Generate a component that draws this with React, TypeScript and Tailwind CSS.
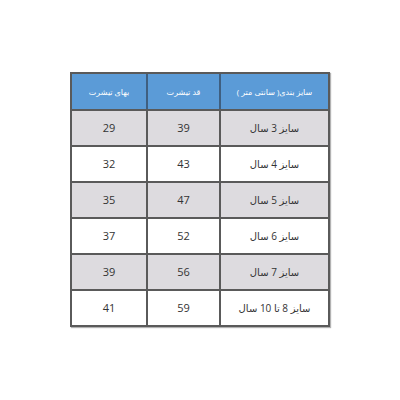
import React from "react";

const rows = [
    { size: "سایز 3 سال", height: "39", width: "29" },
    { size: "سایز 4 سال", height: "43", width: "32" },
    { size: "سایز 5 سال", height: "47", width: "35" },
    { size: "سایز 6 سال", height: "52", width: "37" },
    { size: "سایز 7 سال", height: "56", width: "39" },
    { size: "سایز 8 تا 10 سال", height: "59", width: "41" },
];

export default function App() {
    return (
        <div
            className="w-[400px] h-[400px] bg-white flex justify-center pt-[72px]"
            style={{ fontFamily: "'Open Sans', 'DejaVu Sans', sans-serif" }}
        >
            <div className="h-fit border-2 border-[#5a5a5a] shadow-[1px_1px_1px_rgba(0,0,0,0.3)]">
                <div className="grid grid-cols-[76px_73px_107px] h-[35px] bg-[#5b9bd7] text-white text-[8px]">
                    <div className="flex items-center justify-center border-r-2 border-[#3f5f80]" dir="rtl">بهای تیشرت</div>
                    <div className="flex items-center justify-center border-r-2 border-[#3f5f80]" dir="rtl">قد تیشرت</div>
                    <div className="flex items-center justify-center" dir="rtl">سایز بندی( سانتی متر )</div>
                </div>
                {rows.map((r, i) => (
                    <div
                        key={r.size}
                        className={`grid grid-cols-[76px_73px_107px] h-[36px] border-t-2 border-[#5a5a5a] text-[11px] text-[#333] ${i % 2 === 0 ? "bg-[#dddbdf]" : "bg-white"}`}
                    >
                        <div className="flex items-center justify-center border-r-2 border-[#5a5a5a]">{r.width}</div>
                        <div className="flex items-center justify-center border-r-2 border-[#5a5a5a]">{r.height}</div>
                        <div className="flex items-center justify-center text-[10px]" dir="rtl">{r.size}</div>
                    </div>
                ))}
            </div>
        </div>
    );
}
